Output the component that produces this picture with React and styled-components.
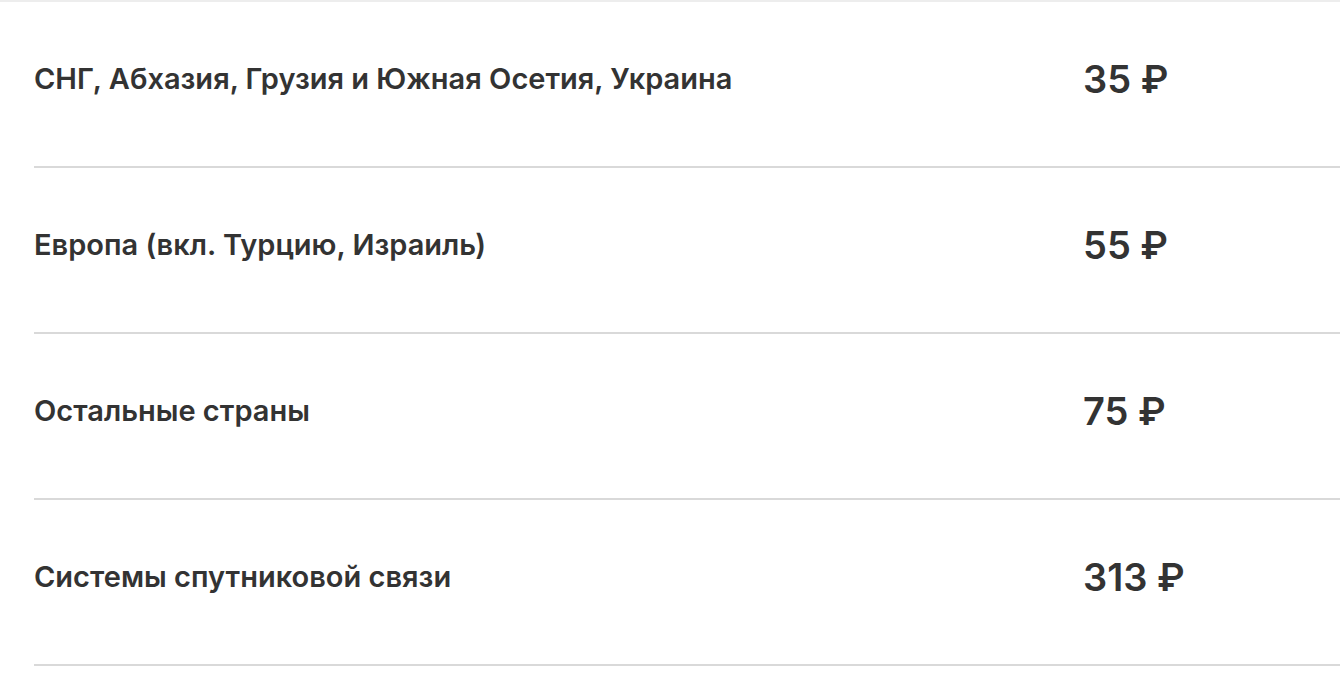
import React from "react";
import styled, { createGlobalStyle } from "styled-components";

const Global = createGlobalStyle`
  html, body { margin: 0; padding: 0; background: #fff; }
  body { font-family: Inter, "Liberation Sans", Arial, sans-serif; color: #333; }
`;

const Page = styled.div`
  width: 1340px;
  border-top: 2px solid #ededed;
`;

const List = styled.div`
  padding-left: 34px;
`;

const Row = styled.div`
  display: grid;
  grid-template-columns: 1049px 1fr;
  align-items: center;
  height: 164px;
  border-bottom: 2px solid #d9d9d9;
`;

const Label = styled.div`
  font-size: 29px;
  line-height: 36px;
  font-weight: 600;
  color: #333;
  margin-top: -10px;
`;

const Price = styled.div`
  font-size: 38px;
  line-height: 46px;
  font-weight: 600;
  color: #333;
  margin-top: -10px;
`;

const rows = [
  ["СНГ, Абхазия, Грузия и Южная Осетия, Украина", "35 ₽"],
  ["Европа (вкл. Турцию, Израиль)", "55 ₽"],
  ["Остальные страны", "75 ₽"],
  ["Системы спутниковой связи", "313 ₽"],
];

export default function App() {
  return (
    <Page>
      <Global />
      <List>
        {rows.map(([l, p]) => (
          <Row key={l}>
            <Label>{l}</Label>
            <Price>{p}</Price>
          </Row>
        ))}
      </List>
    </Page>
  );
}
